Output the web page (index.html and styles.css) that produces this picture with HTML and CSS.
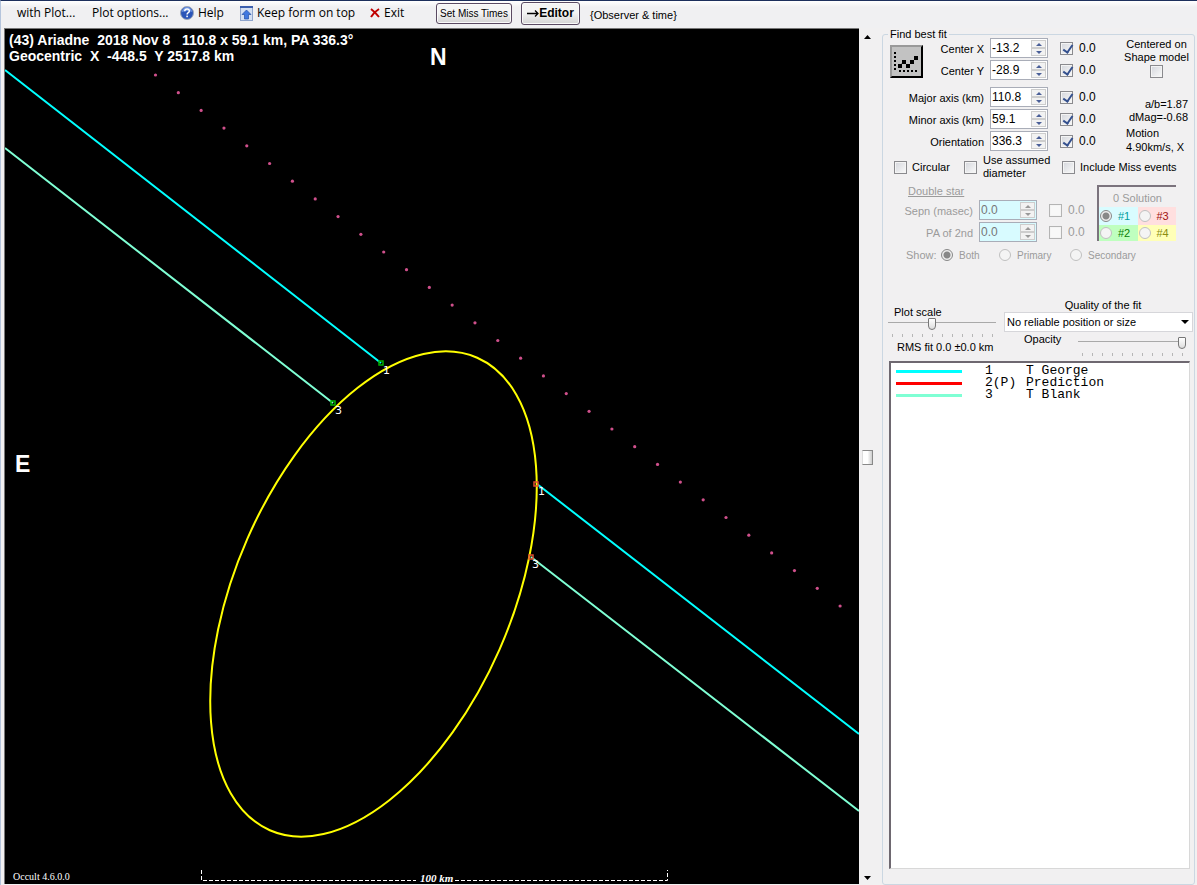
FILE: index.html
```html
<!DOCTYPE html>
<html lang="en">
<head>
<meta charset="utf-8">
<title>Occult - Plot</title>
<link rel="stylesheet" href="styles.css">
</head>
<body>
<div class="window">
  <header class="toolbar">
    <button class="menu with-plot">with Plot...</button>
    <button class="menu options">Plot options...</button>
    <button class="menu help">
      <svg width="14" height="14" viewBox="0 0 14 14"><circle cx="7" cy="7" r="6.5" fill="#2b55b8" stroke="#9fa8b8"/><path d="M2 6a5 5 0 0 1 10 0q-5-2-10 0z" fill="#6f94e0"/><path d="M4.8 5.2q0-2.2 2.3-2.2t2.2 2q0 1.200-1.300 1.800-.9.500-.9 1.700" fill="none" stroke="#fff" stroke-width="1.500"/><rect x="6.300" y="9.600" width="1.600" height="1.600" fill="#fff"/></svg>
      Help</button>
    <button class="menu keep">
      <svg width="13" height="15" viewBox="0 0 13 15"><rect x=".5" y=".5" width="12" height="14" fill="#d3dff2" stroke="#8ea4cc"/><path d="M0 1h13" stroke="#3b5fae" stroke-width="2"/><path d="M6.500 4 11 8.500H8.500V13h-4V8.500H2z" fill="#3f78e0" stroke="#2450a8" stroke-width=".7"/></svg>
      Keep form on top</button>
    <button class="menu exit">
      <svg width="10" height="10" viewBox="0 0 10 10"><path d="M1 1q4 3 8 8M9 1Q4 4 1 9" fill="none" stroke="#c00000" stroke-width="2"/></svg>
      Exit</button>
    <button class="push miss">Set Miss Times</button>
    <button class="push editor"><svg width="12" height="9" viewBox="0 0 12 9"><path d="M0 4.500h11M8 1.500l3 3-3 3" fill="none" stroke="#000" stroke-width="1.300"/></svg>Editor</button>
    <span class="observer">{Observer &amp; time}</span>
  </header>
  <main class="body">
    <section class="plot">
      <svg id="chart" viewBox="5 29 854 855" preserveAspectRatio="xMinYMin meet">
        <g id="dots" fill="#d0508c"></g>
        <g fill="none" stroke-width="2">
          <path d="M5 70 381 363M537 484 859 734" stroke="#00ffff"/>
          <path d="M5 148 333 403M531 557 859 811" stroke="#7fffd4"/>
          <ellipse cx="373.500" cy="594" rx="137.700" ry="258" transform="rotate(23.700 373.500 594)" stroke="#ffff00"/>
        </g>
        <g fill="none" stroke-width="1.500">
          <path d="M379 361h4v4h-4zM331 401h4v4h-4z" stroke="#00b000"/>
          <path d="M534 482h4v4h-4zM529 555h4v4h-4z" stroke="#e05030"/>
        </g>
        <g class="chord">
          <text x="383" y="374">1</text><text x="335" y="414">3</text>
          <text x="538" y="495">1</text><text x="532" y="568">3</text>
        </g>
        <g class="title">
          <text x="9" y="45">(43) Ariadne  2018 Nov 8   110.8 x 59.1 km, PA 336.3°</text>
          <text x="9" y="61">Geocentric  X  -448.5  Y 2517.8 km</text>
        </g>
        <g class="compass"><text x="430" y="65">N</text><text x="15" y="472">E</text></g>
        <path d="M201.500 870v10.500H416M455 880.500h212.500V870" fill="none" stroke="#fff" stroke-dasharray="4 2"/>
        <text class="scale" x="420" y="882">100 km</text>
        <text class="version" x="13" y="880">Occult 4.6.0.0</text>
      </svg>
    </section>
    <div class="vslider" role="presentation">
      <svg width="7" height="4" viewBox="0 0 7 4"><path d="M0 4h7L3.500 0z"/></svg>
      <span class="grip"></span>
      <svg width="7" height="4" viewBox="0 0 7 4"><path d="M0 0h7L3.500 4z"/></svg>
    </div>
    <fieldset class="side">
      <legend>Find best fit</legend>
      <div class="top">
        <div class="fit">
          <button class="chart-btn" aria-label="Fit">
            <svg width="28" height="28" viewBox="0 0 28 28"><path d="M2 4v20M6 23h19" stroke="#000" stroke-width="2" stroke-dasharray="2 2"/><path d="M6.500 18l4.500-4 4 4 8-8" stroke="#000" fill="none"/><path d="M5 16h4v4H5zM9 12h4v4H9zM13 16h4v4h-4zM17 12h4v4h-4zM21 8h4v4h-4z"/></svg>
          </button>
          <label class="name" for="cx">Center X</label><span class="spin"><input id="cx" value="-13.2"><button aria-label="up"></button><button class="down" aria-label="down"></button></span><label class="tick"><input type="checkbox" checked>0.0</label>
          <label class="name" for="cy">Center Y</label><span class="spin"><input id="cy" value="-28.9"><button aria-label="up"></button><button class="down" aria-label="down"></button></span><label class="tick"><input type="checkbox" checked>0.0</label>
          <label class="name wide" for="maj">Major axis (km)</label><span class="spin"><input id="maj" value="110.8"><button aria-label="up"></button><button class="down" aria-label="down"></button></span><label class="tick"><input type="checkbox" checked>0.0</label>
          <label class="name wide" for="min">Minor axis (km)</label><span class="spin"><input id="min" value="59.1"><button aria-label="up"></button><button class="down" aria-label="down"></button></span><label class="tick"><input type="checkbox" checked>0.0</label>
          <label class="name wide" for="ori">Orientation</label><span class="spin"><input id="ori" value="336.3"><button aria-label="up"></button><button class="down" aria-label="down"></button></span><label class="tick"><input type="checkbox" checked>0.0</label>
        </div>
        <div class="info">
          <label class="shape">Centered on<br>Shape model<input type="checkbox"></label>
          <p class="ratio">a/b=1.87<br>dMag=-0.68</p>
          <p class="motion">Motion<br>4.90km/s, X</p>
        </div>
      </div>
      <div class="flags">
        <label><input type="checkbox">Circular</label>
        <label class="assumed"><input type="checkbox"><span>Use assumed<br>diameter</span></label>
        <label class="include"><input type="checkbox">Include Miss events</label>
      </div>
      <div class="double">
        <div class="star">
          <span class="head">Double star</span>
          <label class="name" for="sep">Sepn (masec)</label><span class="spin"><input id="sep" value="0.0" disabled><button disabled aria-label="up"></button><button class="down" disabled aria-label="down"></button></span><label class="tick"><input type="checkbox" disabled>0.0</label>
          <label class="name" for="pa">PA of 2nd</label><span class="spin"><input id="pa" value="0.0" disabled><button disabled aria-label="up"></button><button class="down" disabled aria-label="down"></button></span><label class="tick"><input type="checkbox" disabled>0.0</label>
        </div>
        <div class="solutions">
          <span class="count">0 Solution</span>
          <label class="s1"><input type="radio" name="sol" checked disabled>#1</label>
          <label class="s3"><input type="radio" name="sol" disabled>#3</label>
          <label class="s2"><input type="radio" name="sol" disabled>#2</label>
          <label class="s4"><input type="radio" name="sol" disabled>#4</label>
        </div>
      </div>
      <div class="show">
        <span>Show:</span>
        <label><input type="radio" name="show" checked disabled>Both</label>
        <label><input type="radio" name="show" disabled>Primary</label>
        <label><input type="radio" name="show" disabled>Secondary</label>
      </div>
      <div class="adjust">
        <div class="zoom">
          <label for="ps">Plot scale</label>
          <input id="ps" type="range" value="40">
          <span class="marks"></span>
          <span class="rms">RMS fit 0.0 ±0.0 km</span>
        </div>
        <div class="quality">
          <label for="q">Quality of the fit</label>
          <div class="pick"><select id="q"><option>No reliable position or size</option></select></div>
          <div class="opacity">
            <label for="op">Opacity</label>
            <div><input id="op" type="range" value="100"><span class="marks"></span></div>
          </div>
        </div>
      </div>
      <ul class="list">
        <li><i class="cyan"></i><span>1</span>T George</li>
        <li><i class="red"></i><span>2(P)</span>Prediction</li>
        <li><i class="aqua"></i><span>3</span>T Blank</li>
      </ul>
    </fieldset>
  </main>
</div>
<script src="script.js"></script>
</body>
</html>
```
FILE: script.js
```js
// Dotted track of the predicted path: 31 evenly spaced points.
const dots = document.getElementById('dots');
for (let i = 0; i <= 30; i++) {
  const c = document.createElementNS('http://www.w3.org/2000/svg', 'circle');
  c.setAttribute('cx', 155.5 + i * 22.82);
  c.setAttribute('cy', 75 + i * 17.7);
  c.setAttribute('r', 1.6);
  dots.appendChild(c);
}
```
FILE: styles.css
```css
* { box-sizing: border-box; }
body { margin: 0; background: #f1f0f1; color: #000; font: 11px/13px "Liberation Sans", Arial, sans-serif; }
button, input, select { font: inherit; color: inherit; margin: 0; padding: 0; }
p { margin: 0; }
svg { display: block; }
.window { height: 100vh; display: flex; flex-direction: column; border-top: 1px solid #1c2f5c; border-left: 1px solid #b4c4dc; }

.toolbar { height: 27px; display: flex; align-items: center; padding: 0 0 3px 16px; white-space: nowrap; background: linear-gradient(#fff, #f0f0f2 6px); flex: none; }
.menu { display: flex; align-items: center; gap: 4px; border: 0; background: none; font: 12px/16px "Open Sans", sans-serif; }
.with-plot { width: 75px; }
.options { width: 88px; }
.help { width: 60px; }
.keep { width: 130px; }
.exit { width: 66px; }
.push { border: 1px solid #5a4a62; border-radius: 3px; background: linear-gradient(#f4f4f4 45%, #d4d4d4); box-shadow: inset 0 0 0 1px #fafafa; display: flex; align-items: center; justify-content: center; }
.miss { width: 76px; height: 21px; font-size: 10px; margin-right: 9px; }
.editor { width: 59px; height: 23px; font-size: 12px; font-weight: bold; margin-right: 10px; }
.observer { padding-top: 5px; }

.body { flex: 1; min-height: 0; display: flex; padding-left: 3px; }
.plot { flex: 1; min-width: 0; background: #000; border-top: 1px solid #777; border-left: 1px solid #777; overflow: hidden; margin-bottom: 1px; }
#chart { width: 100%; height: 100%; fill: #fff; }
#chart text { white-space: pre; }
.chord { font: 11px "DejaVu Sans", sans-serif; }
.title { font: bold 14px "Liberation Sans", sans-serif; }
.compass { font: bold 23px "Liberation Sans", sans-serif; }
.scale { font: italic bold 11px "Liberation Serif", serif; }
.version { font: 10px "Liberation Serif", serif; }
.vslider { width: 23px; display: flex; flex-direction: column; justify-content: space-between; padding: 7px 5px 5px; flex: none; }
.grip { width: 11px; height: 15px; margin-left: -2px; border: 1px solid #888; border-left-color: #ddd; background: linear-gradient(90deg, #fff 50%, #ccc); }

.side { width: 313px; flex: none; margin: 0 2px 0 0; padding: 0; border: 1px solid #cbd7e2; border-radius: 3px; display: flex; flex-direction: column; min-width: 0; }
legend { line-height: 12px; margin-left: 5px; padding: 0 2px; }
.top { display: flex; justify-content: space-between; margin-top: -2px; }
.fit { display: grid; grid-template-columns: 33px 67px 58px auto; grid-template-rows: 20px 25px 20px 20px 20px; row-gap: 2px; padding-left: 7px; align-items: start; }
.chart-btn { grid-row: 1 / 3; align-self: center; width: 33px; height: 33px; display: grid; place-items: center; background: #c2c2c2; border: 2px outset #999; border-right-color: #444; border-bottom-color: #444; }
.name { text-align: right; padding-right: 6px; line-height: 22px; white-space: nowrap; }
.wide { grid-column: 1 / 3; }
.spin { width: 58px; height: 20px; display: grid; grid-template: 1fr 1fr / 1fr 15px; background: #fff; border: 1px solid #a9adb8; padding: 1px; }
.spin input { grid-row: 1 / 3; width: 100%; min-width: 0; border: 0; background: none; font-size: 12px; }
.spin button { border: 1px solid #cdcdcd; background: #f2f2f2; display: grid; place-items: center; height: 8px; }
.spin button::before { content: ""; border: 3px solid transparent; border-top: 0; border-bottom-color: #4a5f97; }
.spin .down::before { border: 3px solid transparent; border-bottom: 0; border-top-color: #4a5f97; }
.tick { display: flex; align-items: center; gap: 6px; padding-left: 12px; height: 20px; font-size: 12px; }
input[type=checkbox] { appearance: none; flex: none; width: 13px; height: 13px; border: 1px solid #8a8a8e; background: linear-gradient(135deg, #d4d6dc, #fafafa); box-shadow: inset 0 0 0 1px #f4f4f4; }
input[type=checkbox]:checked::before { content: ""; display: block; width: 4px; height: 8px; margin: 0 0 0 4px; border: solid #34508e; border-width: 0 2px 2px 0; transform: rotate(35deg); }
input[type=checkbox]:disabled { border-color: #b4b4b4; background: #f8f8f8; }
.info { width: 75px; white-space: nowrap; }
.shape { display: flex; flex-direction: column; align-items: center; text-align: center; }
.shape input { margin-top: 1px; }
.ratio { text-align: right; padding-right: 6px; margin-top: 20px; }
.motion { padding-left: 7px; margin-top: 2px; line-height: 14px; }

.flags { display: flex; align-items: center; height: 26px; padding-left: 11px; }
.flags label { display: flex; align-items: center; gap: 5px; width: 70px; white-space: nowrap; }
.flags .assumed { width: 98px; gap: 6px; }
.flags .include { width: 120px; }

.double { display: flex; color: #9b9b9b; margin-top: 5px; height: 57px; }
.star { display: grid; grid-template-columns: 96px 58px 60px; grid-template-rows: 13px 20px 20px; row-gap: 2px; }
.head { grid-column: 1 / 4; text-decoration: underline; padding-left: 25px; }
.star .spin { background: #d8fbff; }
.star .spin input { color: #777; }
.star .spin button::before { border-bottom-color: #999; }
.star .spin .down::before { border-top-color: #999; }
.solutions { width: 79px; height: 56px; border-top: 2px solid #7b737d; border-left: 2px solid #7b737d; display: grid; grid-template: 20px 18px 16px / 1fr 1fr; }
.count { grid-column: 1 / 3; line-height: 22px; text-align: center; }
.solutions label { display: flex; align-items: center; gap: 6px; padding-left: 1px; }
.s1 { background: #d9fcff; color: #009c9c; }
.s3 { background: #ffdfdf; color: #a01010; }
.s2 { background: #bfffbf; color: #088008; }
.s4 { background: #ffffb8; color: #8c8c10; }
input[type=radio] { appearance: none; flex: none; width: 12px; height: 12px; border: 1px solid #c0c0c0; border-radius: 50%; background: #f4f4f4; }
input[type=radio]:checked { border-color: #888; background: radial-gradient(circle, #888 3px, #eee 4px); }
.show { display: flex; align-items: center; height: 14px; margin-top: 6px; padding-left: 23px; color: #9b9b9b; }
.show span { width: 35px; }
.show label { display: flex; align-items: center; gap: 6px; font-size: 10px; width: 58px; }
.show label:nth-of-type(2) { width: 71px; }

.adjust { display: flex; justify-content: space-between; margin-top: 37px; height: 62px; }
.zoom { width: 118px; padding: 7px 0 0 5px; display: flex; flex-direction: column; }
.zoom label { padding-left: 6px; line-height: 12px; }
input[type=range] { appearance: none; display: block; width: 108px; height: 12px; background: linear-gradient(#a9a9a9, #a9a9a9) 0 4px / 100% 1px no-repeat; }
input[type=range]::-webkit-slider-thumb { appearance: none; width: 8px; height: 12px; border: 1px solid #777; border-radius: 1px 1px 4px 4px; background: linear-gradient(#fff, #ddd); }
.marks { display: block; height: 3px; width: 102px; margin: 4px 0 0 4px; background: repeating-linear-gradient(90deg, #b6b6b6 0 1px, transparent 1px 10px); }
.rms { padding: 4px 0 0 9px; white-space: nowrap; }
.quality { width: 190px; display: flex; flex-direction: column; }
.quality > label { text-align: center; padding-left: 8px; }
.pick { position: relative; margin-right: 1px; }
.pick::after { content: ""; position: absolute; right: 4px; top: 8px; border: 4px solid transparent; border-bottom: 0; border-top-color: #000; pointer-events: none; }
select { appearance: none; width: 100%; height: 20px; border: 1px solid #d6d6da; background: #fff; padding-left: 2px; }
.opacity { display: flex; padding: 1px 0 0 20px; gap: 17px; }
.opacity > div { padding-top: 4px; }
.list { flex: 1; margin: 0 4px 15px 6px; padding: 2px 0 0 5px; list-style: none; background: #fff; border: 1px solid #d8d8d8; border-top: 2px solid #6e6870; border-left: 2px solid #6e6870; font: 13px/12px "Liberation Mono", monospace; }
.list li { display: flex; align-items: center; height: 12px; white-space: nowrap; }
.list i { width: 66px; height: 3px; margin-right: 23px; }
.list span { width: 41px; }
.cyan { background: #00ffff; }
.red { background: #ff0000; }
.aqua { background: #7fffd4; }
```
